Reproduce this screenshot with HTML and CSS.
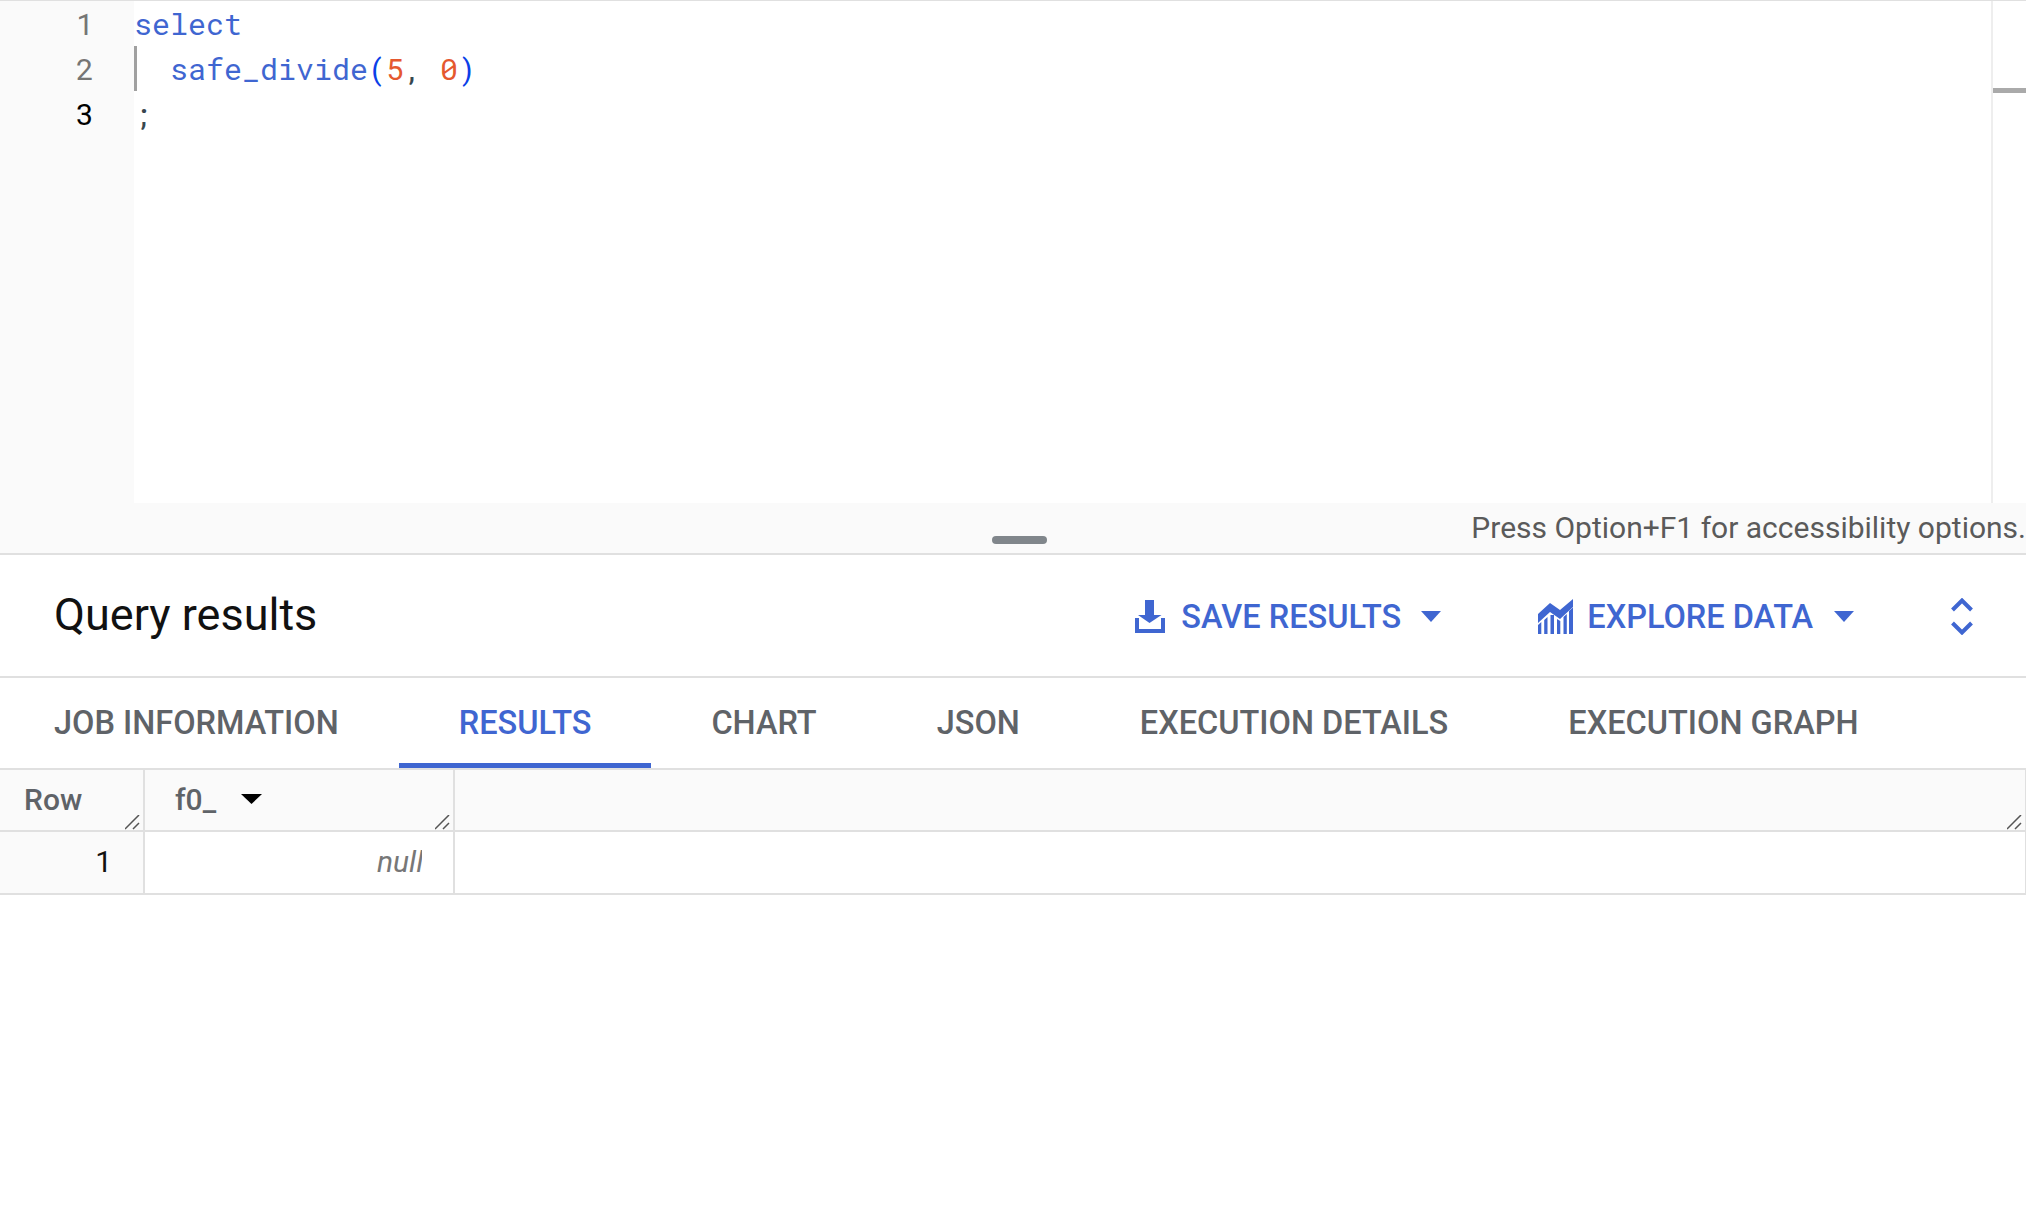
FILE: index.html
```html
<!DOCTYPE html>
<html lang="en">
<head>
<meta charset="utf-8">
<title>Query results</title>
<link rel="stylesheet" href="styles.css">
</head>
<body>
<section class="editor">
  <div class="gutter">
    <div class="ln">1</div>
    <div class="ln">2</div>
    <div class="ln active">3</div>
  </div>
  <div class="code">
    <div class="line kw">select</div>
    <div class="line guide"><span class="kw">  safe_divide</span><span class="paren">(</span><span class="num">5</span><span class="punct">, </span><span class="num">0</span><span class="paren">)</span></div>
    <div class="line punct">;</div>
  </div>
  <div class="ruler"><div class="ruler-mark"></div></div>
</section>
<div class="status">
  <div class="handle"></div>
  <span class="a11y">Press Option+F1 for accessibility options.</span>
</div>
<header class="head">
  <h1 class="title">Query results</h1>
  <div class="actions">
    <button class="act act-save">
      <svg class="ico-save" viewBox="0 0 30 33"><path d="M10 0h9v15h7.500L14.500 23 3 15h7z"/><path d="M0 18h4v11h22V18h4v15H0z"/></svg>
      <span>SAVE RESULTS</span>
      <svg class="caret" viewBox="0 0 20 11"><path d="M0 0h20L10 11z"/></svg>
    </button>
    <button class="act act-explore">
      <svg class="ico-explore" viewBox="0 0 35 35"><path d="M0 15 12 4l10 7L35 0v8L22 20 12 13 0 24z"/><path d="M0 26l3.300-3v12H0zM6.200 21l3.300-3v17H6.200zM12.500 16h3.500v19h-3.500zM19 20l3.300 2v13H19zM25.500 18l3.300-3v20h-3.300zM31 12l4-3.500V35h-4z"/></svg>
      <span>EXPLORE DATA</span>
      <svg class="caret caret-explore" viewBox="0 0 20 11"><path d="M0 0h20L10 11z"/></svg>
    </button>
    <svg class="ico-expand" viewBox="0 0 22 37"><path d="M1.500 12 11 2.500 20.500 12M1.500 25 11 34.500 20.500 25"/></svg>
  </div>
</header>
<nav class="tabs">
  <a class="tab">JOB INFORMATION</a>
  <a class="tab on">RESULTS</a>
  <a class="tab">CHART</a>
  <a class="tab">JSON</a>
  <a class="tab">EXECUTION DETAILS</a>
  <a class="tab">EXECUTION GRAPH</a>
</nav>
<div class="grid">
  <div class="th c1">Row<svg class="rz" viewBox="0 0 15 15"><path d="M0 14 14 0M8 14l6-6"/></svg></div>
  <div class="th c2">f0_<svg class="sort" viewBox="0 0 21 10"><path d="M0 0h21L10.500 10z"/></svg><svg class="rz" viewBox="0 0 15 15"><path d="M0 14 14 0M8 14l6-6"/></svg></div>
  <div class="th c3"><svg class="rz" viewBox="0 0 15 15"><path d="M0 14 14 0M8 14l6-6"/></svg></div>
  <div class="td c1 rownum">1</div>
  <div class="td c2 val"><span class="null">null</span></div>
  <div class="td c3"></div>
</div>
</body>
</html>
```

FILE: styles.css
```css
* { box-sizing: border-box; }
html, body { margin: 0; background: #fff; }
body { font-family: Roboto, "Liberation Sans", sans-serif; height: 1220px; overflow: hidden; }

.editor { display: flex; height: 503px; border-top: 1px solid #e0e0e0; }
.gutter { width: 134px; background: #fafafa; }
.ln { height: 45px; line-height: 45px; text-align: right; padding-right: 40px; font-size: 30px; color: #757575; font-family: "Roboto Mono", Roboto, sans-serif; }
.ln.active { color: #000; }
.code { flex: 1; font-family: "Roboto Mono", "DejaVu Sans Mono", monospace; font-size: 30px; }
.line { height: 45px; line-height: 45px; white-space: pre; }
.guide { border-left: 3px solid #a0a0a0; text-indent: -3px; }
.kw { color: #3f66d1; }
.paren { color: #0b3fe8; }
.num { color: #e5582f; }
.punct { color: #37474f; }
.ruler { width: 35px; border-left: 2px solid #eee; }
.ruler-mark { height: 5px; margin-top: 87px; background: #aaa; }

.status { position: relative; height: 52px; padding-bottom: 2px; background: #fafafa; border-bottom: 2px solid #e0e0e0; display: flex; justify-content: flex-end; align-items: center; padding-right: 0; }
.a11y { font-size: 30px; color: #5a5a5a; }
.handle { position: absolute; left: 992px; top: 33px; width: 55px; height: 8px; border-radius: 4px; background: #80868b; }

.head { display: flex; align-items: center; justify-content: space-between; height: 123px; padding-left: 54px; border-bottom: 2px solid #e0e0e0; }
.title { margin: 0 0 2px; font-size: 45px; font-weight: 400; color: #111; }
.actions { display: flex; align-items: center; padding-right: 53px; padding-top: 2px; }
.act { display: flex; align-items: center; background: none; border: 0; padding: 0; font: 500 32.500px Roboto, sans-serif; color: #3f66d1; }
.act svg { fill: #3f66d1; }
.act-save { margin-right: 97px; }
.act-explore { margin-right: 97px; }
.ico-save { width: 30px; height: 33px; margin-right: 16px; }
.ico-explore { width: 35px; height: 35px; margin-right: 14px; }
.caret { width: 20px; height: 11px; margin-left: 20px; }
.caret-explore { margin-left: 21px; }
.ico-expand { width: 22px; height: 37px; fill: none; stroke: #3f66d1; stroke-width: 4; }

.tabs { display: flex; height: 90px; }
.tab { display: flex; align-items: center; padding: 4px 60px 0; font-size: 32.500px; font-weight: 500; color: #5f6368; border-bottom: 5px solid transparent; }
.tab:first-child { padding-left: 54px; }
.tab.on { color: #3f66d1; border-bottom-color: #3f66d1; }

.grid { display: grid; grid-template-columns: 145px 310px 1fr; grid-template-rows: 62px 63px; border-top: 2px solid #e0e0e0; }
.th, .td { position: relative; border-right: 2px solid #e0e0e0; border-bottom: 2px solid #e0e0e0; padding-bottom: 2px; display: flex; align-items: center; font-size: 30px; }
.th { background: #fafafa; font-weight: 500; color: #5f6368; }
.th.c1 { padding-left: 24px; }
.th.c2 { padding-left: 30px; }
.sort { width: 21px; height: 10px; margin-left: 25px; fill: #000; }
.rz { position: absolute; right: 3px; bottom: 0; width: 15px; height: 15px; fill: none; stroke: #555; stroke-width: 1.500; }
.rownum { background: #fafafa; justify-content: flex-end; padding-right: 31px; color: #111; }
.val { justify-content: flex-end; padding-right: 31px; }
.null { display: block; width: 45px; overflow: hidden; font-style: italic; color: #777; white-space: nowrap; }
.td.c3, .th.c3 { border-right-width: 1px; }
```
